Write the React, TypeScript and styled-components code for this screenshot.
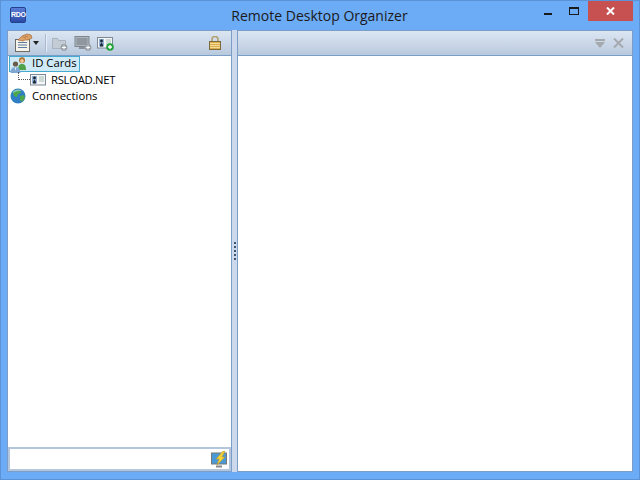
import React from "react";
import styled, { createGlobalStyle } from "styled-components";

const Global = createGlobalStyle`
  html, body { margin: 0; padding: 0; }
  body { width: 640px; height: 480px; overflow: hidden; font-family: "Open Sans", "Noto Sans", sans-serif; }
`;

const Window = styled.div`
  width: 640px;
  height: 480px;
  box-sizing: border-box;
  display: flex;
  flex-direction: column;
  background: #6cabf5;
  border: 1px solid #5b93d6;
`;

const TitleBar = styled.div`
  height: 29px;
  display: grid;
  grid-template-columns: 1fr auto 1fr;
  align-items: start;
  padding: 0 6px 0 9px;
`;

const AppLogo = styled.div`
  margin-top: 6px;
  width: 16px;
  height: 16px;
  box-sizing: border-box;
  border-radius: 2px;
  border: 1px solid #25408c;
  background: linear-gradient(#5a7fd8, #2b4aa6);
  color: #fff;
  font: bold 7px/14px "Liberation Sans", sans-serif;
  text-align: center;
  letter-spacing: -0.3px;
`;

const Title = styled.div`
  font-size: 14px;
  line-height: 30px;
  margin-left: -4px;
  color: #1a1a1a;
`;

const Caption = styled.div`
  justify-self: end;
  display: flex;
  align-items: flex-start;
`;

const CaptionButton = styled.div<{ $close?: boolean }>`
  width: ${(p) => (p.$close ? "45px" : "29px")};
  height: 20px;
  display: flex;
  align-items: center;
  justify-content: center;
  background: ${(p) => (p.$close ? "#c75050" : "transparent")};
`;

const MinGlyph = styled.svg`
  margin: 6px 0 0 7px;
`;

const Body = styled.div`
  flex: 1;
  min-height: 0;
  display: flex;
  padding: 0 6px 7px;
`;

const LeftPanel = styled.div`
  width: 225px;
  display: flex;
  flex-direction: column;
  box-sizing: border-box;
  border: 1px solid #7b9ec8;
  background: #fff;
`;

const RightPanel = styled.div`
  flex: 1;
  display: flex;
  flex-direction: column;
  box-sizing: border-box;
  border: 1px solid #7b9ec8;
  background: #fff;
`;

const Splitter = styled.div`
  width: 5px;
  background: #ccd9ec;
  display: flex;
  flex-direction: column;
  align-items: center;
  justify-content: center;
  gap: 2px;
`;

const Grip = styled.span`
  width: 2px;
  height: 2px;
  margin-left: 1px;
  background: #3f5570;
`;

const Toolbar = styled.div<{ $right?: number }>`
  height: 24px;
  flex-shrink: 0;
  display: flex;
  align-items: center;
  padding: 0 ${(p) => p.$right ?? 3}px 0 7px;
  background: linear-gradient(#dce6f3, #b9c9dd);
  border-bottom: 1px solid #7b9ec8;
`;

const Sep = styled.div`
  width: 1px;
  height: 18px;
  margin: 0 5px 0 6px;
  background: #a9bad0;
  box-shadow: 1px 0 0 #e6edf6;
`;

const ToolIcon = styled.div`
  width: 23px;
  height: 18px;
  display: flex;
  align-items: center;
`;

const Spacer = styled.div`
  flex: 1;
`;

const Tree = styled.div`
  flex: 1;
  min-height: 0;
  padding-left: 1px;
`;

const TreeRow = styled.div`
  height: 16px;
  display: flex;
  align-items: center;
  font-size: 11.3px;
  line-height: 14px;
  color: #000;
`;

const RowIcon = styled.div<{ $width: number; $inset?: number }>`
  width: ${(p) => p.$width}px;
  height: 16px;
  flex-shrink: 0;
  box-sizing: border-box;
  padding-left: ${(p) => p.$inset ?? 0}px;
`;

const Selected = styled.div`
  height: 16px;
  box-sizing: border-box;
  display: flex;
  align-items: flex-start;
  padding-right: 2px;
  background: #cfe9f6;
  border: 1px solid #46a9cf;
`;

const SelectedLabel = styled.span`
  margin-top: -1px;
`;

const CardLabel = styled.span`
  letter-spacing: -0.3px;
`;

const Dots = styled.div`
  width: 11px;
  height: 7px;
  margin: 0 0 9px 9px;
  border-left: 1px dotted #555;
  border-bottom: 1px dotted #555;
  flex-shrink: 0;
`;

const SearchBar = styled.div`
  height: 24px;
  flex-shrink: 0;
  box-sizing: border-box;
  display: flex;
  align-items: center;
  justify-content: flex-end;
  padding-right: 3px;
  background: #fff;
  border-top: 1px solid #7b9ec8;
  outline: 2px solid #b4c6de;
  outline-offset: -2px;
`;

const Lock = () => (
  <svg width="12" height="14" viewBox="0 0 12 14">
    <path d="M3 6V3.5a3 3 0 0 1 6 0V6" fill="none" stroke="#b3a06e" strokeWidth="1.6" />
    <rect x="0.5" y="5.5" width="11" height="8" fill="#dcae50" stroke="#7d6a3c" />
    <path d="M1 7.5h10M1 9.5h10M1 11.5h10" stroke="#f5dc94" />
  </svg>
);

const Card = ({ plus }: { plus?: boolean }) => (
  <svg width="18" height="16" viewBox="0 0 18 16">
    <rect x="0.5" y="2.5" width="15" height="10.5" fill="#f4f6f8" stroke="#7d8a96" />
    <rect x="2" y="4" width="5" height="7.5" fill="#8fb0d4" />
    <circle cx="4.5" cy="6" r="1.4" fill="#1d2530" />
    <path d="M3 11.5c0-2 .7-3.5 1.5-3.5S6 9.5 6 11.5z" fill="#1d2530" />
    <path d="M9 5h5M9 7h5M9 9h5" stroke="#a6bcb2" />
    {plus && (
      <>
        <circle cx="13" cy="12" r="3.8" fill="#24a33a" />
        <path d="M11 12h4M13 10v4" stroke="#fff" strokeWidth="1.4" />
      </>
    )}
  </svg>
);

const FolderOff = () => (
  <svg width="18" height="17" viewBox="0 0 18 17">
    <path d="M1.5 3.5h5l1 2h7v8h-13z" fill="#c3cbd4" stroke="#a9b2bd" />
    <circle cx="13" cy="12.5" r="3.4" fill="#9aa2ab" />
    <path d="M11 12.5h4M13 10.5v4" stroke="#fff" />
  </svg>
);

const MonitorOff = () => (
  <svg width="19" height="17" viewBox="0 0 19 17">
    <rect x="1" y="1.5" width="14" height="10" fill="#aeb4ba" stroke="#7e8791" />
    <rect x="2.5" y="3" width="11" height="7" fill="#8f979f" />
    <path d="M5 13h7" stroke="#8a929b" strokeWidth="2" />
    <circle cx="14" cy="12.5" r="3.4" fill="#9aa2ab" />
    <path d="M12 12.5h4M14 10.5v4" stroke="#fff" />
  </svg>
);

const NotesHand = () => (
  <svg width="18" height="20" viewBox="0 0 18 20">
    <rect x="0.5" y="6.5" width="14" height="12" fill="#f6f4ea" stroke="#6d6d66" />
    <path d="M3 9.5h9M3 12h9M3 14.5h9" stroke="#5d7aa0" />
    <path d="M3 7l4-4 5-2 4 1 1 3-4 2-3 0-2 1z" fill="#dda268" stroke="#a5693a" strokeWidth="0.7" />
    <path d="M8 4l3 1M10 3l3 1" stroke="#a5693a" strokeWidth="0.6" />
  </svg>
);

const People = () => (
  <svg width="18" height="16" viewBox="0 0 18 16">
    <circle cx="12" cy="3.2" r="3" fill="#a9702f" />
    <circle cx="12" cy="4" r="1.9" fill="#f0c69a" />
    <path d="M8 13c0-4 1-6 4-6s4 2 4 6z" fill="#4fa14a" />
    <circle cx="5.5" cy="7" r="2.6" fill="#6a5a4a" />
    <path d="M0.5 16c0-4 2-6 5-6s5 2 5 6z" fill="#7ea6d2" />
    <path d="M4.5 10.5h2l-1 3z" fill="#e8f0f8" />
  </svg>
);

const Globe = () => (
  <svg width="16" height="16" viewBox="0 0 16 16">
    <circle cx="8" cy="8" r="7.5" fill="#2f7fc4" />
    <path d="M3 4c2-2 5-3 7-2l1 3-3 1-1 3-3-1zM10 8l4-1 1 3-3 4-2-2z" fill="#4fa84a" />
    <path d="M3 3.5C5 1.5 10 1 12.5 3 10 2.5 6 3 3 5z" fill="#a8d8f0" opacity="0.7" />
  </svg>
);

const Connect = () => (
  <svg width="17" height="17" viewBox="0 0 17 17">
    <rect x="0.5" y="2" width="15" height="11" fill="#4a9ad8" stroke="#777" />
    <path d="M5 15.5h6" stroke="#888" strokeWidth="2" />
    <path d="M12 0L5 8h3l-2 6 8-8h-3l3-6z" fill="#f4d33c" stroke="#b8962a" strokeWidth="0.6" />
  </svg>
);

export default function App() {
  return (
    <Window>
      <Global />
      <TitleBar>
        <AppLogo>RDO</AppLogo>
        <Title>Remote Desktop Organizer</Title>
        <Caption>
          <CaptionButton>
            <MinGlyph width="8" height="2"><rect width="8" height="2" fill="#1a1a1a" /></MinGlyph>
          </CaptionButton>
          <CaptionButton>
            <svg width="10" height="9">
              <rect x="0.5" y="0.5" width="9" height="7" fill="none" stroke="#1a1a1a" />
              <rect width="10" height="2" fill="#1a1a1a" />
            </svg>
          </CaptionButton>
          <CaptionButton $close>
            <svg width="9" height="8" viewBox="0 0 9 8">
              <path d="M1 0.5l7 7M8 0.5l-7 7" stroke="#fff" strokeWidth="2" />
            </svg>
          </CaptionButton>
        </Caption>
      </TitleBar>
      <Body>
        <LeftPanel>
          <Toolbar $right={10}>
            <NotesHand />
            <svg width="6" height="4" viewBox="0 0 6 4"><path d="M0 0h6L3 4z" fill="#222" /></svg>
            <Sep />
            <ToolIcon><FolderOff /></ToolIcon>
            <ToolIcon><MonitorOff /></ToolIcon>
            <ToolIcon><Card plus /></ToolIcon>
            <Spacer />
            <Lock />
          </Toolbar>
          <Tree>
            <TreeRow>
              <Selected>
                <RowIcon $width={22}><People /></RowIcon>
                <SelectedLabel>ID Cards</SelectedLabel>
              </Selected>
            </TreeRow>
            <TreeRow>
              <Dots />
              <RowIcon $width={21}><Card /></RowIcon>
              <CardLabel>RSLOAD.NET</CardLabel>
            </TreeRow>
            <TreeRow>
              <RowIcon $width={23} $inset={1}><Globe /></RowIcon>
              <span>Connections</span>
            </TreeRow>
          </Tree>
          <SearchBar><Connect /></SearchBar>
        </LeftPanel>
        <Splitter>
          <Grip /><Grip /><Grip /><Grip /><Grip />
        </Splitter>
        <RightPanel>
          <Toolbar>
            <Spacer />
            <svg width="10" height="9" viewBox="0 0 10 9">
              <path d="M0 0h10v2H0zM0 3h10L5 9z" fill="#a5a9ae" />
            </svg>
            <svg width="24" height="10" viewBox="0 0 24 10">
              <path d="M9 0.5l9 9M18 0.5l-9 9" stroke="#a5a9ae" strokeWidth="2" />
            </svg>
          </Toolbar>
        </RightPanel>
      </Body>
    </Window>
  );
}
